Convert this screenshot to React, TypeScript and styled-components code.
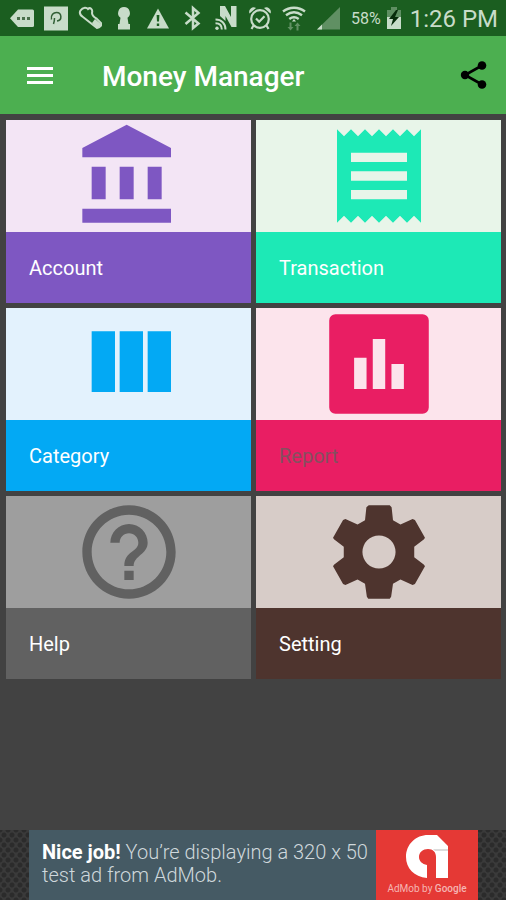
import React from "react";
import styled, { createGlobalStyle } from "styled-components";

const GlobalStyle = createGlobalStyle`
  * { box-sizing: border-box; }
  body {
    margin: 0;
    background: #424242;
    font-family: Roboto, "Liberation Sans", sans-serif;
  }
`;

const Screen = styled.div`
  min-height: 100vh;
  display: flex;
  flex-direction: column;
  background: #424242;
`;

const StatusBar = styled.div`
  height: 36px;
  flex: none;
  display: flex;
  align-items: center;
  justify-content: space-between;
  padding: 0 8px 0 10px;
  background: #1b5e20;
  color: #c8dcc9;
`;

const StatusGroup = styled.div<{ $gap: number }>`
  display: flex;
  align-items: center;
  gap: ${(p) => p.$gap}px;
`;

const StatusIcon = styled.svg`
  display: block;
  width: 24px;
  height: 26px;
  fill: currentColor;
`;

const BatteryIcon = styled.svg`
  display: block;
  width: 16px;
  height: 24px;
`;

const BatteryText = styled.span`
  font-size: 16px;
  line-height: 20px;
  padding-top: 2px;
`;

const Clock = styled.time`
  margin-left: 3px;
  font-size: 24px;
  line-height: 34px;
  padding-top: 2px;
`;

const AppBar = styled.header`
  height: 78px;
  flex: none;
  display: flex;
  align-items: center;
  padding: 0 16px 0 24px;
  background: #4caf50;
`;

const Title = styled.h1`
  margin: 0 0 0 46px;
  flex: 1;
  padding-top: 3px;
  color: #fff;
  font-size: 28px;
  line-height: 36px;
  font-weight: 500;
`;

const IconButton = styled.button`
  display: flex;
  padding: 0;
  border: 0;
  background: none;
  cursor: pointer;
`;

const Grid = styled.nav`
  flex: 1;
  display: grid;
  grid-template-columns: 1fr 1fr;
  align-content: start;
  gap: 5px;
  padding: 6px 5px 6px 6px;
`;

const Tile = styled.a<{ $color: string }>`
  display: block;
  background: ${(p) => p.$color};
  color: ${(p) => p.$color};
  text-decoration: none;
`;

const TileArt = styled.div<{ $tint: string }>`
  display: flex;
  justify-content: center;
  background: ${(p) => p.$tint};
`;

const TileIcon = styled.svg`
  display: block;
  width: 112px;
  height: 112px;
  fill: currentColor;
`;

const TileLabel = styled.span<{ $ink: string }>`
  display: block;
  padding: 24px 23px 23px;
  font-size: 20px;
  line-height: 24px;
  color: ${(p) => p.$ink};
`;

const AdStrip = styled.footer`
  flex: none;
  display: flex;
  justify-content: center;
  padding: 0 28px 0 29px;
  background-color: #3a3a3a;
  background-image: radial-gradient(circle, #2b2b2b 2px, transparent 3px),
    radial-gradient(circle, #2b2b2b 2px, transparent 3px);
  background-size: 8px 10px;
  background-position: 0 0, 4px 5px;
`;

const AdLink = styled.a`
  flex: 1;
  display: flex;
  max-width: 640px;
  min-height: 70px;
  background: #455a64;
  color: #cfd8dc;
  text-decoration: none;
`;

const AdText = styled.p`
  flex: 1;
  margin: 0;
  padding: 11px 0 11px 13px;
  font-size: 20px;
  line-height: 23px;
  font-weight: 300;

  strong {
    color: #fff;
    font-weight: 700;
  }
`;

const AdBrand = styled.div`
  width: 102px;
  display: flex;
  flex-direction: column;
  align-items: center;
  padding-top: 5px;
  background: #e53935;
  color: #f5b5b3;
  font-size: 10px;
  line-height: 14px;
  white-space: nowrap;

  svg { display: block; margin-bottom: 3px; }
  b { font-weight: 500; }
`;

type TileData = {
  name: string;
  color: string;
  tint: string;
  ink?: string;
  box?: number;
  art: React.ReactNode;
};

const tiles: TileData[] = [
  {
    name: "Account",
    color: "#7e57c2",
    tint: "#f3e5f5",
    art: <path d="M4 10v7h3v-7H4zm6 0v7h3v-7h-3zM2 22h19v-3H2v3zm14-12v7h3v-7h-3zm-4.500-9L2 6v2h19V6l-9.500-5z" />,
  },
  {
    name: "Transaction",
    color: "#1de9b6",
    tint: "#e8f5e9",
    art: (
      <path d="M18 17H6v-2h12v2zm0-4H6v-2h12v2zm0-4H6V7h12v2zM3 22l1.500-1.500L6 22l1.500-1.500L9 22l1.500-1.500L12 22l1.500-1.500L15 22l1.500-1.500L18 22l1.500-1.500L21 22V2l-1.500 1.500L18 2l-1.500 1.500L15 2l-1.500 1.500L12 2l-1.500 1.500L9 2 7.500 3.500 6 2 4.500 3.500 3 2v20z" />
    ),
  },
  {
    name: "Category",
    color: "#03a9f4",
    tint: "#e3f2fd",
    art: <path d="M10 18h5V5h-5v13zm-6 0h5V5H4v13zM16 5v13h5V5h-5z" />,
  },
  {
    name: "Report",
    color: "#e91e63",
    tint: "#fce4ec",
    ink: "#85505f",
    box: 18,
    art: (
      <path
        fillRule="evenodd"
        d="M2 1h14a1 1 0 0 1 1 1v14a1 1 0 0 1-1 1H2a1 1 0 0 1-1-1V2a1 1 0 0 1 1-1zM5 8v5h2V8H5zm3-3v8h2V5H8zm3 4v4h2V9h-2z"
      />
    ),
  },
  {
    name: "Help",
    color: "#616161",
    tint: "#9e9e9e",
    art: (
      <path d="M11 18h2v-2h-2v2zm1-16C6.480 2 2 6.480 2 12s4.480 10 10 10 10-4.480 10-10S17.520 2 12 2zm0 18c-4.410 0-8-3.590-8-8s3.590-8 8-8 8 3.590 8 8-3.590 8-8 8zm0-14c-2.210 0-4 1.790-4 4h2c0-1.100.9-2 2-2s2 .9 2 2c0 2-3 1.750-3 5h2c0-2.250 3-2.500 3-5 0-2.210-1.790-4-4-4z" />
    ),
  },
  {
    name: "Setting",
    color: "#4e342e",
    tint: "#d7ccc8",
    art: (
      <path
        fillRule="evenodd"
        d="M9.800 2h4.500l.4.4.3 2.800 1.600.9 2.600-1.150.5.2 2.150 3.800-.2.300-2.100 1.650v2.200l2.100 1.650.2.300-2.150 3.800-.5.200-2.600-1.150-1.600.9-.4 2.800-.3.400H9.700l-.3-.4-.4-2.800-1.600-.9-2.600 1.150-.5-.2-2.150-3.800.2-.300 2.100-1.650v-2.200L2.350 9.250l-.2-.300L4.300 5.150l.5-.2L7.400 6.100 9 5.200l.3-2.800zM12 8.450a3.550 3.550 0 1 0 0 7.100 3.550 3.550 0 0 0 0-7.100z"
      />
    ),
  },
];

const statusIcons: React.ReactNode[] = [
  // message tag
  <>
    <path d="M8 4.500h14.500q1.500 0 1.500 1.500v14.500q0 1.500-1.500 1.500H8L0 13.200z" />
    <path d="M7 12h3v3H7zm5 0h3v3h-3zm5 0h3v3h-3z" fill="#496f4b" />
  </>,
  // app badge
  <>
    <path d="M0 1.500h24v24H0z" />
    <path d="M9.500 19c.8-2 1-4 1-6M7.500 14.500c-1-4.500 2-7 5-7 5.500 0 6 8 .5 8.500" fill="none" stroke="#315f35" strokeWidth="1.500" />
  </>,
  // boot
  <>
    <path d="M2.500 5.500C5 1.500 9 2.500 10 4c2-2 5 0 4 4 0 3 2 4 5 6l4 4c1 2-1 5-4 5L5 12C2 10 1 8 2.500 5.500z" fill="none" stroke="currentColor" strokeWidth="2" />
    <path d="M14 18l3-4 6 5c0 3-3 4-5 3z" />
  </>,
  // keyhole
  <path d="M12 2a6 6 0 0 1 3.500 10.800L16.500 19H18v5.500H6V19h1.500l1-6.200A6 6 0 0 1 12 2z" />,
  // warning
  <>
    <path d="M12 3.500L23 23.500H1z" />
    <path d="M10.600 10h2.800l-.4 6.500h-2zM10.800 18.500h2.400V21h-2.400z" fill="#1b5e20" />
  </>,
  // bluetooth
  <path d="M5.500 7.500L18.500 18.500 13 23V3l5.500 5L5.500 19" fill="none" stroke="currentColor" strokeWidth="2.500" />,
  // NFC
  <>
    <path d="M6 1h5l6 11V1h5.500v21h-5L11.500 11v5L6 11z" />
    <path d="M1.500 14.500c6 0 10 4 10 10M1.500 18.200c4 0 6.300 2.500 6.300 6.300" fill="none" stroke="currentColor" strokeWidth="2" />
    <circle cx="3" cy="23.200" r="1.700" />
  </>,
  // alarm
  <>
    <g fill="none" stroke="currentColor" strokeWidth="2.200">
      <circle cx="12" cy="14" r="8.800" />
      <path d="M8 13.500l3.200 3.200 5.300-5.500M5.500 20.500L3.500 24M18.500 20.500l2 3.500" />
    </g>
    <path d="M1.500 8.500A4.500 4.500 0 0 1 8 3zM22.500 8.500A4.500 4.500 0 0 0 16 3z" />
  </>,
  // wifi with data arrows
  <>
    <path d="M1 6.500c6.500-5 15.500-5 22 0M4 10.300c5-3.700 11-3.700 16 0M7.300 14c3-2.200 6.400-2.200 9.400 0" fill="none" stroke="currentColor" strokeWidth="2.400" />
    <path d="M10 16.500L12 14l2 2.500z" />
    <path d="M8.500 25.500L5.500 22h2v-4.500h2V22h2zM15.500 17.500l3 3.500h-2v4.500h-2V21h-2z" opacity=".4" />
  </>,
  // mobile signal
  <>
    <path d="M24 2v22.500H1z" opacity=".4" />
    <path d="M6 19.500v5H1z" />
  </>,
];

export default function App() {
  return (
    <Screen>
      <GlobalStyle />
      <StatusBar>
        <StatusGroup $gap={10}>
          {statusIcons.map((art, i) => (
            <StatusIcon key={i} viewBox="0 0 24 26" aria-hidden="true">
              {art}
            </StatusIcon>
          ))}
        </StatusGroup>
        <StatusGroup $gap={5}>
          <BatteryText>58%</BatteryText>
          <BatteryIcon viewBox="0 0 16 24" aria-hidden="true">
            <path d="M5 1h6v3h4v8H1V4h4z" fill="#5f8f62" />
            <path d="M1 11h14v12H1z" fill="#c8dcc9" />
            <path d="M10 4L3 13h4l-2 7 8-9H9l3-7z" fill="#082c0b" />
          </BatteryIcon>
          <Clock>1:26 PM</Clock>
        </StatusGroup>
      </StatusBar>

      <AppBar>
        <IconButton aria-label="Open menu">
          <svg width="32" height="32" viewBox="0 0 32 32" fill="#fff">
            <path d="M3 8h26v3H3zM3 15h26v3H3zM3 22h26v3H3z" />
          </svg>
        </IconButton>
        <Title>Money Manager</Title>
        <IconButton aria-label="Share">
          <svg width="32" height="32" viewBox="0 0 32 32">
            <path d="M24 6.500L7 16l17 9.500" fill="none" stroke="#000" strokeWidth="2.600" />
            <circle cx="24" cy="6.500" r="4.300" />
            <circle cx="7" cy="16" r="4.200" />
            <circle cx="24" cy="25.500" r="4.300" />
          </svg>
        </IconButton>
      </AppBar>

      <Grid aria-label="Sections">
        {tiles.map((t) => (
          <Tile key={t.name} href={"#" + t.name.toLowerCase()} $color={t.color}>
            <TileArt $tint={t.tint}>
              <TileIcon viewBox={`0 0 ${t.box ?? 24} ${t.box ?? 24}`} aria-hidden="true">
                {t.art}
              </TileIcon>
            </TileArt>
            <TileLabel $ink={t.ink ?? "#fff"}>{t.name}</TileLabel>
          </Tile>
        ))}
      </Grid>

      <AdStrip>
        <AdLink href="#admob">
          <AdText>
            <strong>Nice job!</strong> You’re displaying a 320 x 50 test ad from AdMob.
          </AdText>
          <AdBrand>
            <svg width="44" height="44" viewBox="0 0 44 44" aria-hidden="true">
              <path
                d="M22 43C9 42 1 33 1 22 1 9 11 0 23 0h9l11 11v32H31V22c0-5-3-8-8-8s-9 3-9 8c0 4 3 7 8 8z"
                fill="#fff"
              />
              <path d="M28 14h15v2H30z" fill="#dcdcdc" />
            </svg>
            <span>
              AdMob by <b>Google</b>
            </span>
          </AdBrand>
        </AdLink>
      </AdStrip>
    </Screen>
  );
}
